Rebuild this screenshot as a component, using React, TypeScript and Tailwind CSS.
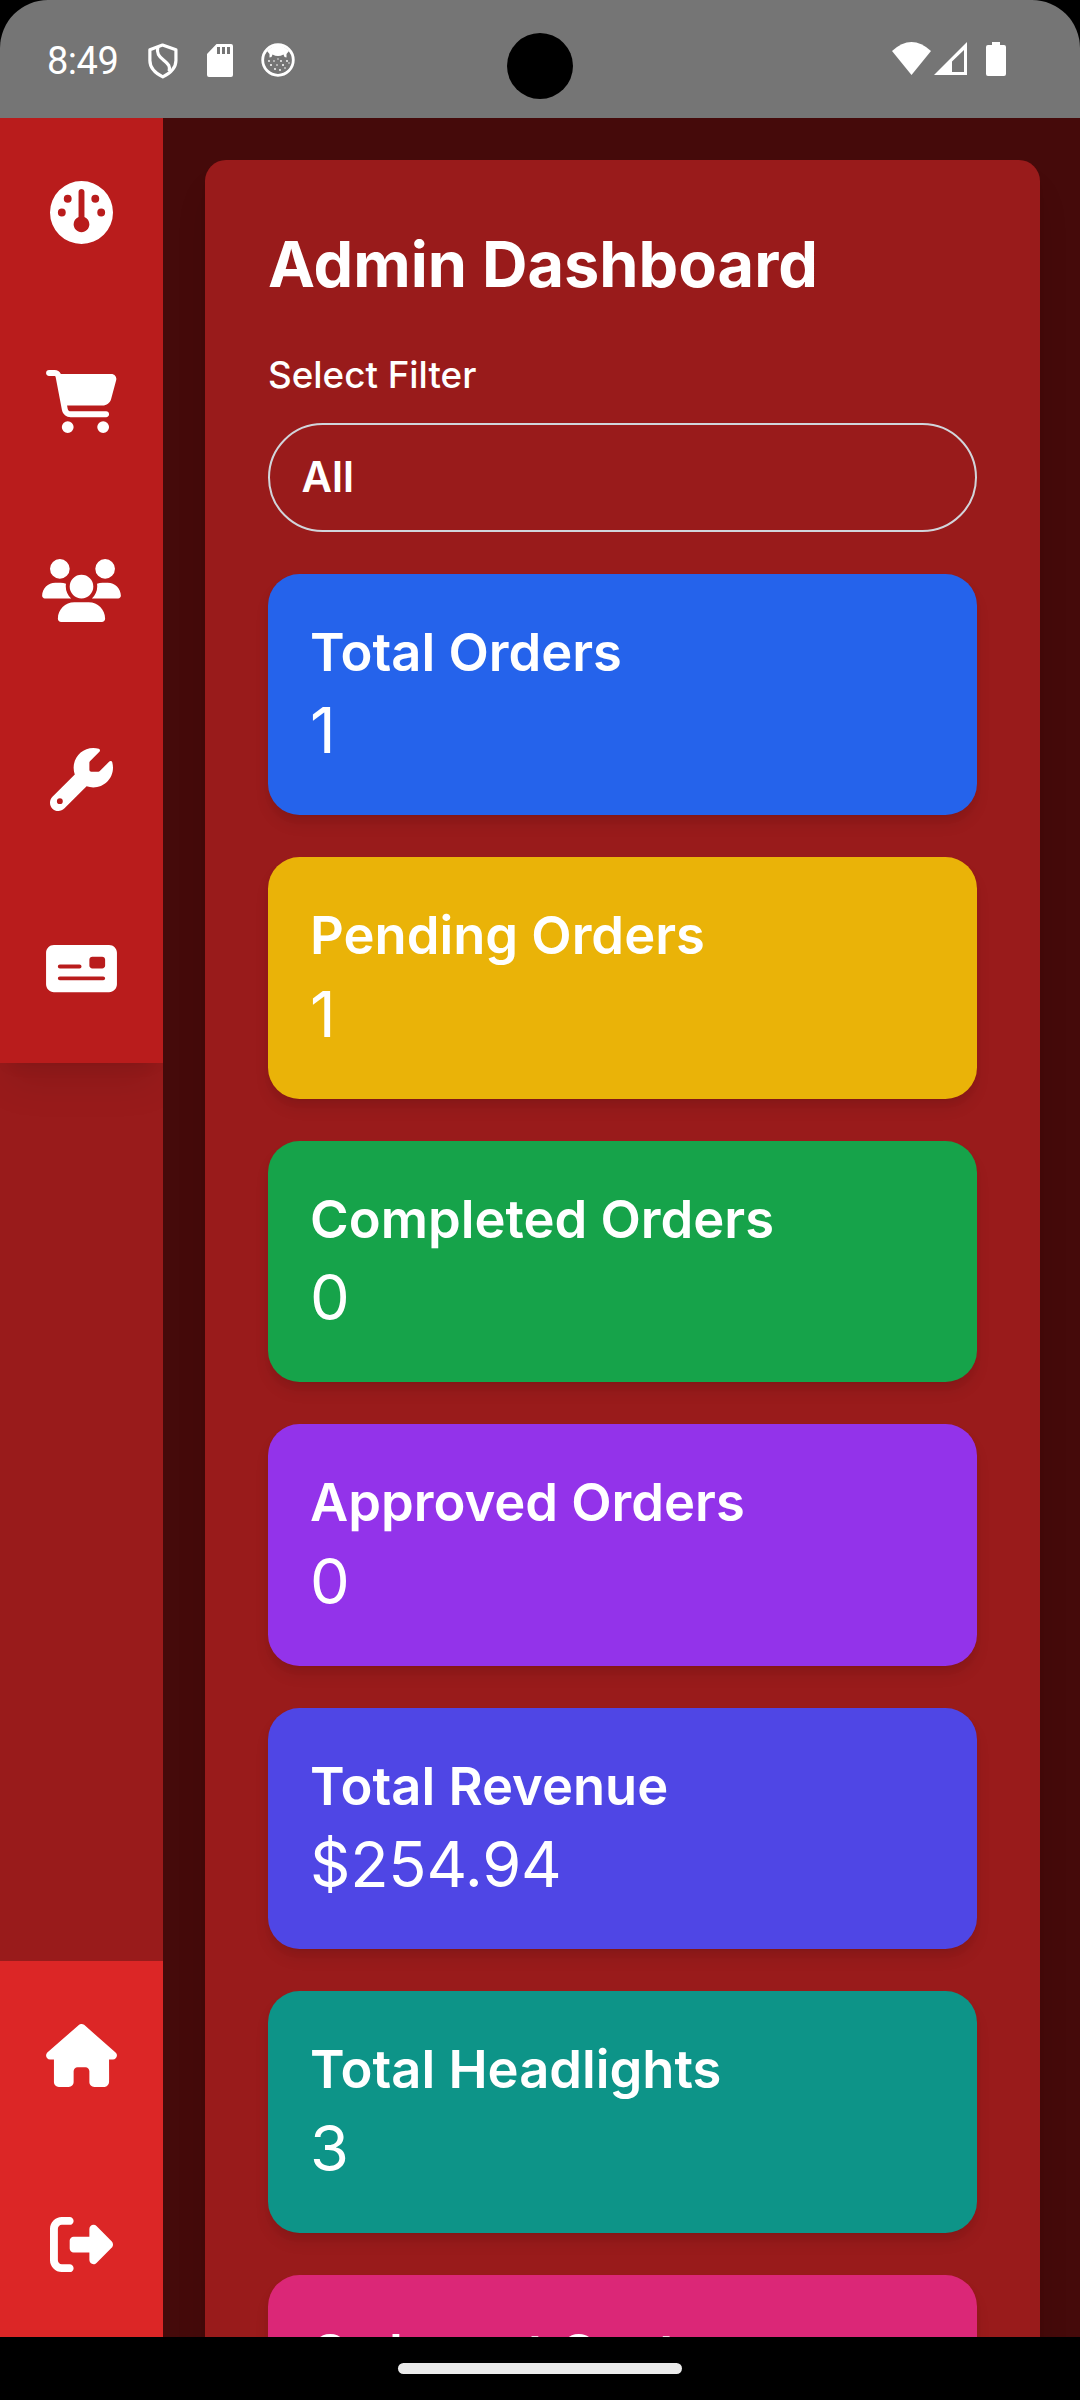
import { FaCartShopping, FaUsers, FaWrench, FaMoneyCheck, FaHouse, FaRightFromBracket } from "react-icons/fa6";
import type { ReactNode } from "react";

const cards = [
  { title: "Total Orders", value: "1", color: "bg-[#2563eb]" },
  { title: "Pending Orders", value: "1", color: "bg-[#eab308]" },
  { title: "Completed Orders", value: "0", color: "bg-[#16a34a]" },
  { title: "Approved Orders", value: "0", color: "bg-[#9333ea]" },
  { title: "Total Revenue", value: "$254.94", color: "bg-[#4f46e5]" },
  { title: "Total Headlights", value: "3", color: "bg-[#0d9488]" },
  { title: "Orders at Cost", value: "0", color: "bg-[#db2777]" },
];

function NavItem({ children }: { children: ReactNode }) {
  return <a className="flex h-[189px] shrink-0 items-center justify-center text-[63px]">{children}</a>;
}

function GaugeIcon() {
  return (
    <svg viewBox="0 0 512 512" className="size-[63px]" fill="currentColor">
      <path
        fillRule="evenodd"
        d="M0 256a256 256 0 1 1 512 0A256 256 0 1 1 0 256zm320 96c0-26.900-16.500-49.900-40-59.300V88c0-13.300-10.700-24-24-24s-24 10.700-24 24v204.700c-23.500 9.500-40 32.500-40 59.300 0 35.300 28.700 64 64 64s64-28.700 64-64zM144 176a32 32 0 1 0 0-64 32 32 0 1 0 0 64zm-16 80a32 32 0 1 0-64 0 32 32 0 1 0 64 0zm288 32a32 32 0 1 0 0-64 32 32 0 1 0 0 64zm-16-144a32 32 0 1 0-64 0 32 32 0 1 0 64 0z"
      />
    </svg>
  );
}

function StatusBar() {
  return (
    <header className="relative h-[118px] shrink-0 bg-black">
      <div className="flex h-full items-center rounded-t-[48px] bg-[#757575] pl-[47px] pr-[74px]">
        <span className="mt-[4px] w-[101px] font-[Roboto] text-[38px] leading-none tracking-[-0.5px]">8:49</span>
        <svg viewBox="0 0 32 38" className="mt-[3px] h-[36px] w-[30px]" fill="none" stroke="currentColor" strokeWidth="3.400" strokeLinejoin="round">
          <path d="M15.500 2 29.800 7v11.500c0 8-7 14-14 17.500C8.700 32.500 2 26.500 2 18.500V7Z" />
          <path d="M10.500 4c-1.500 7 1 10 6 14 4 3.500 8 6 6 12" />
        </svg>
        <svg viewBox="0 0 26 33" className="ml-[29px] mt-[2px] h-[33px] w-[26px]" fill="currentColor">
          <path fillRule="evenodd" d="M9.500 0H24a2 2 0 0 1 2 2v29a2 2 0 0 1-2 2H2a2 2 0 0 1-2-2V10ZM10 3v7h3V3Zm5 0v7h3V3Zm5 0v7h3V3Z" />
        </svg>
        <svg viewBox="0 0 34 34" className="ml-[28px] mt-[2px] size-[34px]" fill="currentColor">
          <circle cx="17" cy="17" r="15.300" fill="none" stroke="currentColor" strokeWidth="2.800" />
          <path d="M6 8Q17-4 28 8L25.500 11v3.500l-2-.5-1-2.500q-5.500 3-11 0l-1 2.500-2 .5V11Z" />
          <g>
            <circle cx="8" cy="18" r=".9" /><circle cx="13" cy="18" r=".8" /><circle cx="20" cy="18" r=".9" />
            <circle cx="26" cy="18" r=".9" /><circle cx="10" cy="22" r="1" /><circle cx="16" cy="22" r=".8" />
            <circle cx="22" cy="22" r="1" /><circle cx="14" cy="26" r=".9" /><circle cx="19" cy="27" r=".9" />
            <circle cx="24" cy="25" r=".8" /><circle cx="28" cy="20" r=".7" /><circle cx="17" cy="16" r=".7" />
          </g>
        </svg>
        <div className="ml-auto flex items-start">
          <svg viewBox="0 0 39 34" className="h-[34px] w-[39px]" fill="currentColor">
            <path d="M0 9Q19.500-9 39 9L19.500 33Z" />
          </svg>
          <svg viewBox="0 0 33 34" className="ml-[3px] h-[34px] w-[33px]" fill="currentColor">
            <path fillRule="evenodd" d="M33 0v33H0ZM30 8 18 19.500V30h12Z" />
          </svg>
          <svg viewBox="0 0 20 34" className="ml-[19px] h-[34px] w-[20px]" fill="currentColor">
            <path d="M6 0h8v3h4a2 2 0 0 1 2 2v27a2 2 0 0 1-2 2H2a2 2 0 0 1-2-2V5a2 2 0 0 1 2-2h4Z" />
          </svg>
        </div>
      </div>
      <div className="absolute left-[507px] top-[33px] size-[66px] rounded-full bg-black" />
    </header>
  );
}

export default function App() {
  return (
    <div className="flex h-[2400px] w-[1080px] flex-col overflow-hidden bg-black font-[Inter,sans-serif] text-white">
      <StatusBar />
      <div className="flex min-h-0 flex-1">
        <aside className="flex w-[163px] shrink-0 flex-col justify-between overflow-hidden bg-[#991b1b]">
          <nav className="flex h-[945px] flex-col bg-[#b91c1c] shadow-[0_26px_39px_-8px_rgba(0,0,0,0.1),0_10px_16px_-10px_rgba(0,0,0,0.1)]">
            <NavItem><GaugeIcon /></NavItem>
            <NavItem><FaCartShopping className="h-[63px] w-[71px]" /></NavItem>
            <NavItem><FaUsers className="h-[63px] w-[79px]" /></NavItem>
            <NavItem><FaWrench /></NavItem>
            <NavItem><FaMoneyCheck className="h-[63px] w-[71px]" /></NavItem>
          </nav>
          <nav className="flex h-[376px] flex-col bg-[#dc2626]">
            <NavItem><FaHouse className="h-[63px] w-[71px]" /></NavItem>
            <NavItem><FaRightFromBracket /></NavItem>
          </nav>
        </aside>
        <main className="min-w-0 flex-1 overflow-hidden bg-[#450a0a] pl-[42px] pr-[40px] pt-[42px]">
          <section className="rounded-[21px] bg-[#991b1b] p-[63px] shadow-[0_26px_39px_-8px_rgba(0,0,0,0.1),0_10px_16px_-10px_rgba(0,0,0,0.1)]">
            <h1 className="-mt-px mb-[43px] text-[63px] font-bold leading-[84px]">Admin Dashboard</h1>
            <label className="mb-[21px] block text-[36.750px] font-medium leading-[52.500px]">Select Filter</label>
            <button className="mb-[42px] flex h-[109px] w-full items-center rounded-full border-2 border-[#d1d5db] px-[31.500px] pb-[2px] text-[42px] font-semibold">All</button>
            <div className="flex flex-col gap-[42px]">
              {cards.map((c) => (
                <article key={c.title} className={`h-[241.500px] shrink-0 rounded-[31.500px] p-[42px] shadow-[0_10.5px_15.75px_-2.6px_rgba(0,0,0,0.1),0_5.25px_10.5px_-5.25px_rgba(0,0,0,0.1)] ${c.color}`}>
                  <h2 className="text-[52.500px] font-semibold leading-[73.500px]">{c.title}</h2>
                  <p className="-mt-px text-[63px] leading-[84px] tracking-[-0.25px]">{c.value}</p>
                </article>
              ))}
            </div>
          </section>
        </main>
      </div>
      <footer className="flex h-[63px] shrink-0 items-center justify-center bg-black">
        <div className="h-[11px] w-[284px] rounded-full bg-[#ebebeb]" />
      </footer>
    </div>
  );
}
